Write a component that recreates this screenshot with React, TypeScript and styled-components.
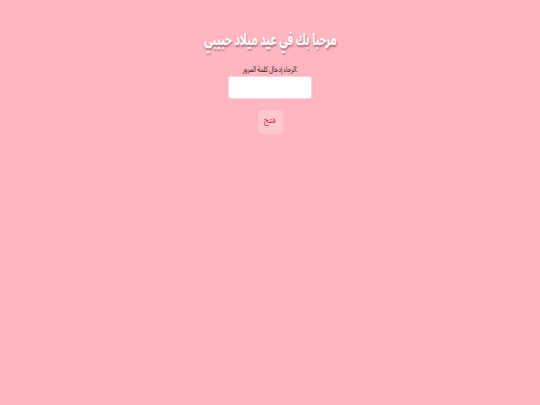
import * as React from "react";
import styled, { createGlobalStyle } from "styled-components";

const GlobalStyle = createGlobalStyle`
  html, body {
    margin: 0;
    padding: 0;
    background-color: #ffb6c1;
    font-family: "Noto Sans Arabic", "DejaVu Sans", sans-serif;
  }
`;

const Page = styled.main`
  min-height: 405px;
  display: flex;
  flex-direction: column;
  align-items: center;
  padding-top: 30px;
  box-sizing: border-box;
  text-align: center;
`;

const Title = styled.h1`
  margin: 0;
  font-size: 16px;
  line-height: 20px;
  font-weight: bold;
  color: #ffffff;
  white-space: nowrap;
  transform: scaleX(0.66);
  text-shadow: 1px 2px 2px rgba(110, 70, 80, 0.55);
`;

const Form = styled.form`
  margin-top: 15px;
  display: flex;
  flex-direction: column;
  align-items: center;
`;

const Label = styled.label`
  font-size: 8px;
  line-height: 10px;
  color: #1e1214;
  white-space: nowrap;
  transform: scaleX(0.72);
`;

const PasswordInput = styled.input`
  margin-top: 1px;
  width: 84px;
  height: 23px;
  box-sizing: border-box;
  border: 1px solid #eddadd;
  border-radius: 3px;
  background: #ffffff;
  padding: 4px;
  outline: none;
`;

const OpenButton = styled.button`
  margin-top: 11px;
  width: 25px;
  height: 24px;
  border: none;
  border-radius: 4px;
  background-color: #ffc8ce;
  color: #d02035;
  font-family: "Noto Sans Arabic", "DejaVu Sans", sans-serif;
  font-size: 8px;
  line-height: 1;
  padding: 0 0 3px;
  cursor: pointer;
`;

export default function App() {
  const [password, setPassword] = React.useState("");
  return (
    <>
      <GlobalStyle />
      <Page>
        <Title>مرحبا بك في عيد ميلاد حبيبي</Title>
        <Form onSubmit={e => e.preventDefault()}>
          <Label htmlFor="pw">الرجاء إدخال كلمة المرور:</Label>
          <PasswordInput
            id="pw"
            type="password"
            value={password}
            onChange={e => setPassword(e.target.value)}
          />
          <OpenButton type="submit">فتح</OpenButton>
        </Form>
      </Page>
    </>
  );
}
